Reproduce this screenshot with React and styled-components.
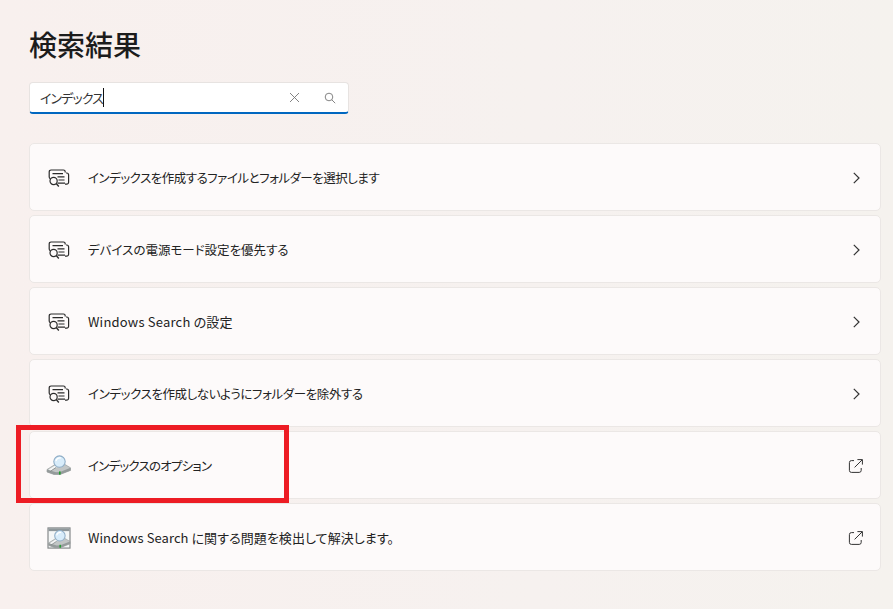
import React from "react";
import styled, { createGlobalStyle } from "styled-components";

const GlobalStyle = createGlobalStyle`
  html, body {
    margin: 0;
    padding: 0;
  }
  body {
    width: 893px;
    height: 609px;
    overflow: hidden;
    font-family: "Noto Sans CJK JP", "Noto Sans", sans-serif;
    color: #1b1b1b;
  }
`;

const Page = styled.div`
  position: relative;
  box-sizing: border-box;
  width: 893px;
  height: 609px;
  padding: 25px 12px 0 29px;
  background: linear-gradient(90deg, #f8f0ee 0%, #f6f1ef 60%, #f5f2ee 100%);
`;

const Title = styled.h1`
  margin: 0;
  height: 38px;
  font-size: 28px;
  line-height: 38px;
  font-weight: 500;
  color: #1c1c1c;
`;

const SearchBox = styled.div`
  box-sizing: border-box;
  display: flex;
  align-items: center;
  width: 320px;
  height: 32px;
  margin-top: 19px;
  padding: 0 11px 0 10px;
  background: #fff;
  border: 1px solid #e7e3e1;
  border-bottom: 2px solid #0067c0;
  border-radius: 4px;
`;

const SearchText = styled.span`
  font-size: 13px;
  line-height: 20px;
  color: #333;
  letter-spacing: -0.9px;
  font-feature-settings: "palt";
`;

const Caret = styled.span`
  width: 1px;
  height: 19px;
  background: #111;
`;

const SearchIcons = styled.div`
  display: flex;
  align-items: center;
  gap: 24px;
  margin-left: auto;
  margin-right: 1px;
  color: #767676;
`;

const List = styled.div`
  display: flex;
  flex-direction: column;
  gap: 4px;
  margin-top: 29px;
`;

const Row = styled.div`
  box-sizing: border-box;
  display: flex;
  align-items: center;
  height: 68px;
  padding: 2px 16px 0;
  background: #fdfafa;
  border: 1px solid #ebe7e5;
  border-radius: 5px;
`;

const IconSlot = styled.div`
  display: flex;
  align-items: center;
  justify-content: center;
  width: 26px;
  height: 26px;
  flex: none;
`;

const Label = styled.span`
  margin-left: 16px;
  font-size: ${(props) => (props.$latin ? "13px" : "12.5px")};
  line-height: 20px;
  color: #222;
  font-weight: 400;
  letter-spacing: ${(props) => props.$tracking}px;
  font-feature-settings: "palt";
`;

const Trailing = styled.div`
  display: flex;
  margin-left: auto;
  color: #333;
`;

const Highlight = styled.div`
  position: absolute;
  left: 16px;
  top: 425px;
  box-sizing: border-box;
  width: 273px;
  height: 78px;
  border: 5px solid #ed1c24;
  pointer-events: none;
`;

const ClearIcon = () => (
  <svg width="11" height="11" viewBox="0 0 11 11" fill="none" stroke="currentColor" strokeWidth="0.9">
    <path d="M1 1l9 9M10 1l-9 9" />
  </svg>
);

const SearchIcon = () => (
  <svg width="12" height="12" viewBox="0 0 12 12" fill="none" stroke="currentColor" strokeWidth="0.9">
    <circle cx="5" cy="5" r="3.8" />
    <path d="M7.8 7.8L11.2 11.2" />
  </svg>
);

const Chevron = () => (
  <svg width="16" height="16" viewBox="0 0 16 16" fill="none" stroke="currentColor" strokeWidth="1.2">
    <path d="M5.8 2.8L11 8l-5.2 5.2" />
  </svg>
);

const ExternalLink = () => (
  <svg width="16" height="16" viewBox="0 0 16 16" fill="none" stroke="currentColor" strokeWidth="1">
    <path d="M6 2.6H3.4A2 2 0 0 0 1.4 4.6v7.8a2 2 0 0 0 2 2h7.8a2 2 0 0 0 2-2V10" />
    <path d="M9.4 1.6h5v5M14.2 1.8L6.6 9.4" />
  </svg>
);

const SettingIcon = () => (
  <svg width="22" height="20" viewBox="0 0 22 20" fill="none" stroke="#2b2b2b" strokeWidth="1.2">
    <path d="M2.5 10.6A1.6 1.6 0 0 1 1.2 9V3.8a1.8 1.8 0 0 1 1.8-1.8h12.4A1.8 1.8 0 0 1 17.2 3.8v.8" />
    <path d="M4.5 5.6h10.5M9.5 8.8h7M10.5 12h6M9.5 15.2h7.5" />
    <path d="M18 5h.6a2 2 0 0 1 2 2v7.2a2 2 0 0 1-2 2H17" />
    <circle cx="5.6" cy="13" r="3.6" />
    <path d="M8.2 15.6l2.6 2.8" strokeWidth="1.4" />
  </svg>
);

const DriveParts = () => (
  <>
    <path d="M1 15.5L9 10.5H19L24.5 13.8V16.4L14 20.5H8L1 18Z" fill="#c2c6c6" stroke="#8f9595" strokeWidth="0.6" />
    <path d="M1 15.5L10 18.2L14 18L24.5 13.8V16.4L14 20.5H8L1 18Z" fill="#959b9b" />
    <path d="M2.5 15.6L9.5 11.2L11.5 12.4L5 16.8Z" fill="#f5f6f6" />
    <path d="M4 17.5L10 13.5" stroke="#7f8585" strokeWidth="0.8" />
    <rect x="13" y="17.4" width="1.6" height="3.2" fill="#1f9e2c" />
    <circle cx="13.5" cy="7.6" r="5.7" fill="#d8ecfa" stroke="#8fadc6" strokeWidth="1.1" />
    <path d="M10 7.2a3.8 3.8 0 0 1 4.8-3.2" stroke="#fff" strokeWidth="1.3" fill="none" />
  </>
);

const IndexIcon = () => (
  <svg width="26" height="24" viewBox="0 0 26 24">
    <DriveParts />
  </svg>
);

const TroubleshootIcon = () => (
  <svg width="24" height="22" viewBox="0 0 26 24">
    <rect x="1" y="1" width="24" height="22" fill="#f5f7f7" stroke="#85898a" strokeWidth="1.3" />
    <rect x="1.5" y="1.5" width="23" height="3" fill="#8f979a" />
    <g transform="translate(0.5 2)">
      <DriveParts />
    </g>
  </svg>
);

const rows = [
  { label: "インデックスを作成するファイルとフォルダーを選択します", icon: <SettingIcon />, trailing: <Chevron />, tracking: -0.5 },
  { label: "デバイスの電源モード設定を優先する", icon: <SettingIcon />, trailing: <Chevron />, tracking: 0 },
  { label: "Windows Search の設定", icon: <SettingIcon />, trailing: <Chevron />, tracking: 0.2, latin: true },
  { label: "インデックスを作成しないようにフォルダーを除外する", icon: <SettingIcon />, trailing: <Chevron />, tracking: -0.4 },
  { label: "インデックスのオプション", icon: <IndexIcon />, trailing: <ExternalLink />, tracking: -0.8 },
  { label: "Windows Search に関する問題を検出して解決します。", icon: <TroubleshootIcon />, trailing: <ExternalLink />, tracking: 0.06, latin: true },
];

const App = () => (
  <Page>
    <GlobalStyle />
    <Title>検索結果</Title>
    <SearchBox>
      <SearchText>インデックス</SearchText>
      <Caret />
      <SearchIcons>
        <ClearIcon />
        <SearchIcon />
      </SearchIcons>
    </SearchBox>
    <List>
      {rows.map((row) => (
        <Row key={row.label}>
          <IconSlot>{row.icon}</IconSlot>
          <Label $latin={row.latin} $tracking={row.tracking}>{row.label}</Label>
          <Trailing>{row.trailing}</Trailing>
        </Row>
      ))}
    </List>
    <Highlight />
  </Page>
);

export default App;
